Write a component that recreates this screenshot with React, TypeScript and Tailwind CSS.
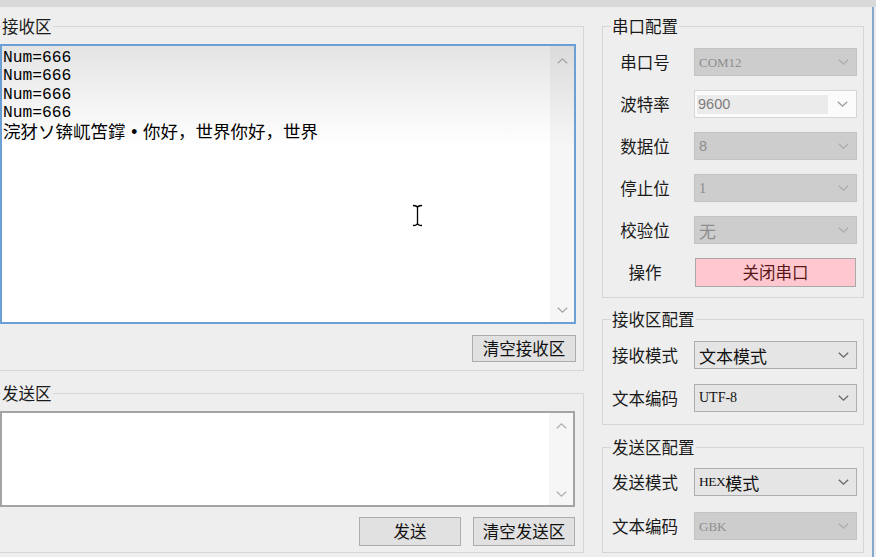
import React from "react";

const SERIF = "font-['Liberation_Serif',serif]";
const SANS = "font-['Liberation_Sans',sans-serif]";
const CJK = "font-['Noto_Sans_CJK_SC',sans-serif]";

function Chev({ up = false, cls }: { up?: boolean; cls: string }) {
  return (
    <svg width="11" height="6" viewBox="0 0 11 6" className={cls}>
      <polyline
        points={up ? "0.8,5.3 5.5,0.9 10.2,5.3" : "0.8,0.7 5.5,5.1 10.2,0.7"}
        fill="none"
        stroke="currentColor"
        strokeWidth="1.3"
      />
    </svg>
  );
}

function Combo({ children, disabled = false }: { children: React.ReactNode; disabled?: boolean }) {
  return (
    <div
      className={
        disabled
          ? "w-[163px] h-[28px] border border-[#c3c3c3] bg-[#cdcdcd] text-[#8e8e8e] flex items-center pl-[4px] pr-[7px]"
          : "w-[163px] h-[28px] border border-[#adadad] bg-[#e5e5e5] text-[#111111] flex items-center pl-[4px] pr-[7px]"
      }
    >
      <div className="flex-1 flex items-center leading-none">{children}</div>
      <Chev cls={disabled ? "text-[#ababab]" : "text-[#666666]"} />
    </div>
  );
}

function Btn({ children, w }: { children: React.ReactNode; w: string }) {
  return (
    <div
      className={`${w} h-full border border-[#adadad] bg-[#e1e1e1] flex items-center justify-center text-[16.5px] leading-none text-[#111111]`}
    >
      {children}
    </div>
  );
}

function Row1({ label, children }: { label: string; children: React.ReactNode }) {
  return (
    <div className="flex items-center h-[28px]">
      <div className="w-[84px] text-center text-[16.5px] leading-none">{label}</div>
      <div className="ml-[7px]">{children}</div>
    </div>
  );
}

function Row2({ label, children }: { label: string; children: React.ReactNode }) {
  return (
    <div className="flex items-center h-[28px]">
      <div className="w-[91px] pl-[9px] text-[16.5px] leading-none">{label}</div>
      <div>{children}</div>
    </div>
  );
}

function Scroll({ py, cls }: { py: string; cls: string }) {
  return (
    <div className={`w-[24px] flex flex-col items-center justify-between bg-black/[0.035] ${py}`}>
      <Chev up cls={cls} />
      <Chev cls={cls} />
    </div>
  );
}

export default function App() {
  return (
    <div
      className={`w-[876px] h-[557px] bg-[#eeeeee] overflow-hidden flex flex-col text-[#1a1a1a] ${CJK}`}
    >
      <div className="h-[7px] shrink-0 bg-[#d9d9d9]" />
      <div className="flex flex-1">
        {/* left column */}
        <div className="w-[584px] flex flex-col">
          <fieldset className="mt-[9px] border-t border-r border-b border-[#d6d6d6] pr-[7px] pb-[8px]">
            <legend className="ml-[1px] px-[1px] text-[16.5px] leading-[20px]">接收区</legend>
            <div className="flex flex-col">
              <div className="relative mt-[8px] h-[280px] border-2 border-[#6aa0d6] bg-[linear-gradient(to_bottom,#e4e4e4,#ffffff_100px)] flex">
                <div className="flex-1 pt-[3px] pl-[1px] text-black">
                  <div className="font-['Liberation_Mono',monospace] text-[16.3px] leading-[18.4px] whitespace-pre">
                    <div>Num=666</div>
                    <div>Num=666</div>
                    <div>Num=666</div>
                    <div>Num=666</div>
                  </div>
                  <div className="font-['Liberation_Mono','Noto_Sans_CJK_SC',monospace] text-[17.5px] leading-[20px] whitespace-pre">
                    浣犲ソ锛屼笘鐣<span className="inline-block w-[1em] text-center">•</span>你好，世界你好，世界
                  </div>
                </div>
                <Scroll py="pt-[12px] pb-[9px]" cls="text-[#a6a6a6]" />
                <svg
                  width="11"
                  height="23"
                  viewBox="0 0 11 23"
                  className="absolute left-[410px] top-[158px] text-black"
                >
                  <path
                    d="M1 1.5 C3.5 1.5 5.5 2 5.5 4 V19 C5.5 21 3.5 21.5 1 21.5 M10 1.5 C7.5 1.5 5.5 2 5.5 4 M5.5 19 C5.5 21 7.5 21.5 10 21.5"
                    fill="none"
                    stroke="currentColor"
                    strokeWidth="1.3"
                  />
                </svg>
              </div>
              <div className="mt-[11px] h-[27px] flex justify-end">
                <Btn w="w-[104px]">清空接收区</Btn>
              </div>
            </div>
          </fieldset>

          <fieldset className="mt-[12px] border-t border-r border-b border-[#d6d6d6] pr-[8px] pb-[6px]">
            <legend className="ml-[1px] px-[1px] text-[16.5px] leading-[20px]">发送区</legend>
            <div className="flex flex-col">
              <div className="mt-[8px] h-[96px] border-2 border-[#a4a4a4] bg-white flex">
                <div className="flex-1" />
                <Scroll py="pt-[10px] pb-[8px]" cls="text-[#b0b0b0]" />
              </div>
              <div className="mt-[10px] h-[29px] flex justify-end gap-[12px]">
                <Btn w="w-[102px]">发送</Btn>
                <Btn w="w-[102px]">清空发送区</Btn>
              </div>
            </div>
          </fieldset>
        </div>

        {/* right column */}
        <div className="w-[262px] ml-[18px] flex flex-col">
          <fieldset className="mt-[9px] border border-[#d6d6d6] pb-[10px]">
            <legend className="ml-[8px] px-[1px] text-[16.5px] leading-[20px]">串口配置</legend>
            <div className="pt-[12px] flex flex-col gap-[14px]">
              <Row1 label="串口号">
                <Combo disabled>
                  <span className={`${SERIF} text-[13px]`}>COM12</span>
                </Combo>
              </Row1>
              <Row1 label="波特率">
                <div className="w-[163px] h-[28px] border border-[#d6d6d6] bg-[#fbfbfb] flex items-center">
                  <div
                    className={`ml-[2px] w-[131px] h-[19px] bg-[#ebebeb] flex items-center pl-[1px] text-[14.5px] leading-none text-[#7d7d7d] ${SANS}`}
                  >
                    9600
                  </div>
                  <div className="flex-1 flex justify-center">
                    <Chev cls="text-[#9a9a9a]" />
                  </div>
                </div>
              </Row1>
              <Row1 label="数据位">
                <Combo disabled>
                  <span className={`${SANS} text-[14.5px]`}>8</span>
                </Combo>
              </Row1>
              <Row1 label="停止位">
                <Combo disabled>
                  <span className={`${SERIF} text-[14.5px]`}>1</span>
                </Combo>
              </Row1>
              <Row1 label="校验位">
                <Combo disabled>
                  <span className="text-[17px]">无</span>
                </Combo>
              </Row1>
              <div className="flex items-center h-[29px]">
                <div className="w-[84px] text-center text-[16.5px] leading-none">操作</div>
                <div className="ml-[8px] w-[161px] h-full border border-[#a9a9a9] bg-[#ffc7cf] flex items-center justify-center text-[16.5px] leading-none text-[#5a1717]">
                  关闭串口
                </div>
              </div>
            </div>
          </fieldset>

          <fieldset className="mt-[11px] border border-[#d6d6d6] pb-[12px]">
            <legend className="ml-[8px] px-[1px] text-[16.5px] leading-[20px]">接收区配置</legend>
            <div className="pt-[12px] flex flex-col gap-[15px]">
              <Row2 label="接收模式">
                <Combo>
                  <span className="text-[17px]">文本模式</span>
                </Combo>
              </Row2>
              <Row2 label="文本编码">
                <Combo>
                  <span className={`${SERIF} text-[14px]`}>UTF-8</span>
                </Combo>
              </Row2>
            </div>
          </fieldset>

          <fieldset className="mt-[12px] border border-[#d6d6d6] pb-[12px]">
            <legend className="ml-[8px] px-[1px] text-[16.5px] leading-[20px]">发送区配置</legend>
            <div className="pt-[11px] flex flex-col gap-[16px]">
              <Row2 label="发送模式">
                <Combo>
                  <span className={`${SERIF} text-[13.5px] tracking-[-0.5px]`}>HEX</span>
                  <span className="text-[17px]">模式</span>
                </Combo>
              </Row2>
              <Row2 label="文本编码">
                <Combo disabled>
                  <span className={`${SERIF} text-[13px]`}>GBK</span>
                </Combo>
              </Row2>
            </div>
          </fieldset>
        </div>

        <div className="ml-[8px] w-[2px] bg-[#86a8ca]" />
      </div>
    </div>
  );
}
